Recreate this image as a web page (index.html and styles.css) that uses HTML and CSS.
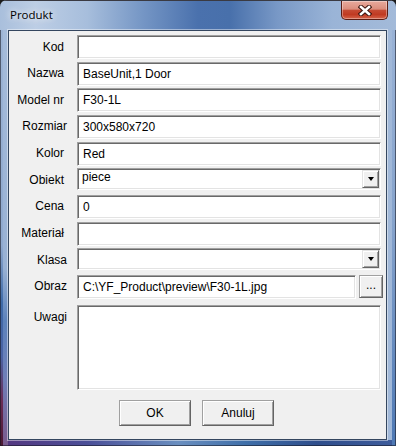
FILE: index.html
```html
<!DOCTYPE html>
<html lang="pl">
  <head>
    <meta charset="UTF-8" />
    <meta name="viewport" content="width=device-width, initial-scale=1.0" />
    <title>Produkt</title>
    <link rel="stylesheet" href="styles.css">
  </head>

  <body>
    <div class="window">
      <div class="titlebar">
        <span class="title">Produkt</span>
        <div class="close-btn">
          <svg width="14" height="11" viewBox="0 0 14 11">
            <path d="M3 2 L11 9 M11 2 L3 9" stroke="#3d1711" stroke-width="4.6" stroke-linecap="square" fill="none" />
            <path d="M3 2 L11 9 M11 2 L3 9" stroke="#fff" stroke-width="2.6" stroke-linecap="square" fill="none" />
          </svg>
        </div>
      </div>

      <div class="client">
        <div class="form">
          <label class="label">Kod</label>
          <input class="field" type="text" value="" />

          <label class="label">Nazwa</label>
          <input class="field" type="text" value="BaseUnit,1 Door" />

          <label class="label">Model nr</label>
          <input class="field" type="text" value="F30-1L" />

          <label class="label label-r">Rozmiar</label>
          <input class="field" type="text" value="300x580x720" />

          <label class="label">Kolor</label>
          <input class="field" type="text" value="Red" />

          <label class="label">Obiekt</label>
          <div class="combo">
            <span class="combo-text">piece</span>
            <span class="combo-btn"><span class="arrow"></span></span>
          </div>

          <label class="label">Cena</label>
          <input class="field" type="text" value="0" />

          <label class="label">Materiał</label>
          <input class="field" type="text" value="" />

          <label class="label label-r">Klasa</label>
          <div class="combo">
            <span class="combo-text"></span>
            <span class="combo-btn"><span class="arrow"></span></span>
          </div>

          <label class="label label-r">Obraz</label>
          <div class="path-row">
            <input class="field" type="text" value="C:\YF_Product\preview\F30-1L.jpg" />
            <button class="browse-btn">...</button>
          </div>

          <label class="label label-r label-top">Uwagi</label>
          <textarea class="field memo"></textarea>
        </div>

        <div class="buttons">
          <button class="btn">OK</button>
          <button class="btn">Anuluj</button>
        </div>
      </div>
    </div>
  </body>
</html>
```

FILE: styles.css
```css
body {
  margin: 0;
  padding: 0;
  background-color: #1c1c1c;
}

.window {
  width: 396px;
  height: 446px;
  box-sizing: border-box;
  display: flex;
  flex-direction: column;
  border-radius: 7px 7px 0 0;
  overflow: hidden;
  background:
    linear-gradient(to bottom, #9fb6d6 0%, #8fa9cf 55%, #3e6aa8 68%, #4b63a4 80%, #6a2c55 90%, #4a1833 100%) left top / 3px 100% no-repeat,
    linear-gradient(to bottom, #a7bddb 0%, #98b1d4 60%, #5c82bb 72%, #6f7fb8 85%, #7a5a8c 100%) left 3px top / 5px 100% no-repeat,
    linear-gradient(to bottom, #9cb4d7 0%, #86a3cc 50%, #4d78b4 100%) right top / 4px 100% no-repeat,
    linear-gradient(to right, #55367f 0%, #4b4f98 22%, #6a8fc0 45%, #3f6fa9 62%, #2f4e8c 80%, #3e5c9c 100%) left bottom / 100% 6px no-repeat,
    #a1b8d8;
  box-shadow: inset 0 0 0 1px rgba(20, 20, 30, 0.55);
}

/* title bar */

.titlebar {
  height: 30px;
  flex-shrink: 0;
  box-sizing: border-box;
  display: flex;
  justify-content: space-between;
  align-items: flex-start;
  padding: 0 8px 0 10px;
  background: linear-gradient(to right, #a9bfdc 0%, #bdcee5 9%, #a7bedc 22%, #7596c5 36%, #4a71ad 50%, #4870ab 58%, #7898c6 70%, #9ab4d7 84%, #a3bad9 100%);
  border-top: 1px solid #3a3a42;
}

.title {
  font-family: "Open Sans", "Noto Sans", sans-serif;
  font-size: 11.5px;
  color: #000;
  line-height: 14px;
  margin-top: 7px;
  text-shadow: 0 0 6px rgba(255, 255, 255, 0.9), 0 0 10px rgba(255, 255, 255, 0.6);
}

.close-btn {
  width: 47px;
  height: 19px;
  box-sizing: border-box;
  display: flex;
  justify-content: center;
  align-items: center;
  border: 1px solid #5b1d14;
  border-top: none;
  border-radius: 0 0 5px 5px;
  background: linear-gradient(to bottom, #e8aa9d 0%, #db8d7d 45%, #c54a33 52%, #c03a22 75%, #d5644a 100%);
  box-shadow: inset 0 0 0 1px rgba(255, 255, 255, 0.35);
}

/* client area */

.client {
  flex: 1;
  margin: 0 9px 6px 8px;
  box-sizing: border-box;
  display: flex;
  flex-direction: column;
  padding: 4px 5px 0 0;
  background-color: #f0f0f0;
  border: 1px solid #34465f;
  box-shadow: 0 0 0 1px rgba(255, 255, 255, 0.45);
  font-family: "Liberation Sans", Arial, sans-serif;
  font-size: 12px;
  color: #000;
}

.form {
  display: grid;
  grid-template-columns: 58px 1fr;
  grid-template-rows: repeat(10, 24px) auto;
  column-gap: 10px;
  row-gap: 2.66px;
}

.label {
  display: flex;
  align-items: center;
  justify-content: flex-end;
  padding-right: 3px;
  line-height: 15px;
}

.label-r {
  padding-right: 0;
}

.label-top {
  align-items: flex-start;
  padding-top: 5px;
  margin-top: 3.34px;
}

/* sunken edit box */
.field {
  width: 100%;
  height: 24px;
  box-sizing: border-box;
  margin: 0;
  padding: 0 4px 0 5px;
  font-family: "Liberation Sans", Arial, sans-serif;
  font-size: 12px;
  color: #000;
  background-color: #fff;
  border: 1px solid;
  border-color: #a0a0a0 #fff #fff #a0a0a0;
  box-shadow: inset 1px 1px #696969, inset -1px -1px #e3e3e3;
  outline: none;
}

.memo {
  display: block;
  height: 85px;
  margin-top: 3.34px;
  resize: none;
}

.combo {
  height: 22px;
  box-sizing: border-box;
  display: flex;
  align-items: flex-start;
  justify-content: space-between;
  padding: 1px 1px 1px 2px;
  background-color: #fff;
  border: 1px solid;
  border-color: #a0a0a0 #fff #fff #a0a0a0;
  box-shadow: inset 1px 1px #696969, inset -1px -1px #e3e3e3;
}

.combo-text {
  line-height: 15px;
  padding-left: 2px;
}

.combo-btn {
  width: 17px;
  height: 18px;
  box-sizing: border-box;
  display: flex;
  justify-content: center;
  align-items: center;
  background-color: #f0f0f0;
  border: 1px solid;
  border-color: #e3e3e3 #646464 #646464 #e3e3e3;
  box-shadow: inset 1px 1px #fff, inset -1px -1px #a0a0a0;
}

.arrow {
  width: 0;
  height: 0;
  border-left: 3.5px solid transparent;
  border-right: 3.5px solid transparent;
  border-top: 4px solid #000;
}

.path-row {
  display: flex;
  align-items: flex-start;
  margin-right: -2px;
}

.path-row .field {
  flex: 1;
  width: auto;
}

.browse-btn {
  width: 24px;
  height: 23px;
  flex-shrink: 0;
  margin-left: 3px;
  padding: 0 0 2px 0;
  box-sizing: border-box;
  font-family: "Liberation Sans", Arial, sans-serif;
  font-size: 12px;
  color: #000;
  background-color: #f0f0f0;
  border: 1px solid;
  border-color: #a0a0a0 #646464 #646464 #a0a0a0;
  box-shadow: inset 1px 1px #fff, inset -1px -1px #a0a0a0;
}

/* bottom buttons */

.buttons {
  display: flex;
  justify-content: center;
  gap: 11px;
  margin-top: 10px;
  padding-left: 3px;
}

.btn {
  width: 72px;
  height: 26px;
  box-sizing: border-box;
  padding: 0;
  font-family: "Liberation Sans", Arial, sans-serif;
  font-size: 12px;
  color: #000;
  background-color: #f0f0f0;
  border: 1px solid;
  border-color: #a0a0a0 #646464 #646464 #a0a0a0;
  box-shadow: inset 1px 1px #fff, inset -1px -1px #a0a0a0;
  cursor: pointer;
}
```
